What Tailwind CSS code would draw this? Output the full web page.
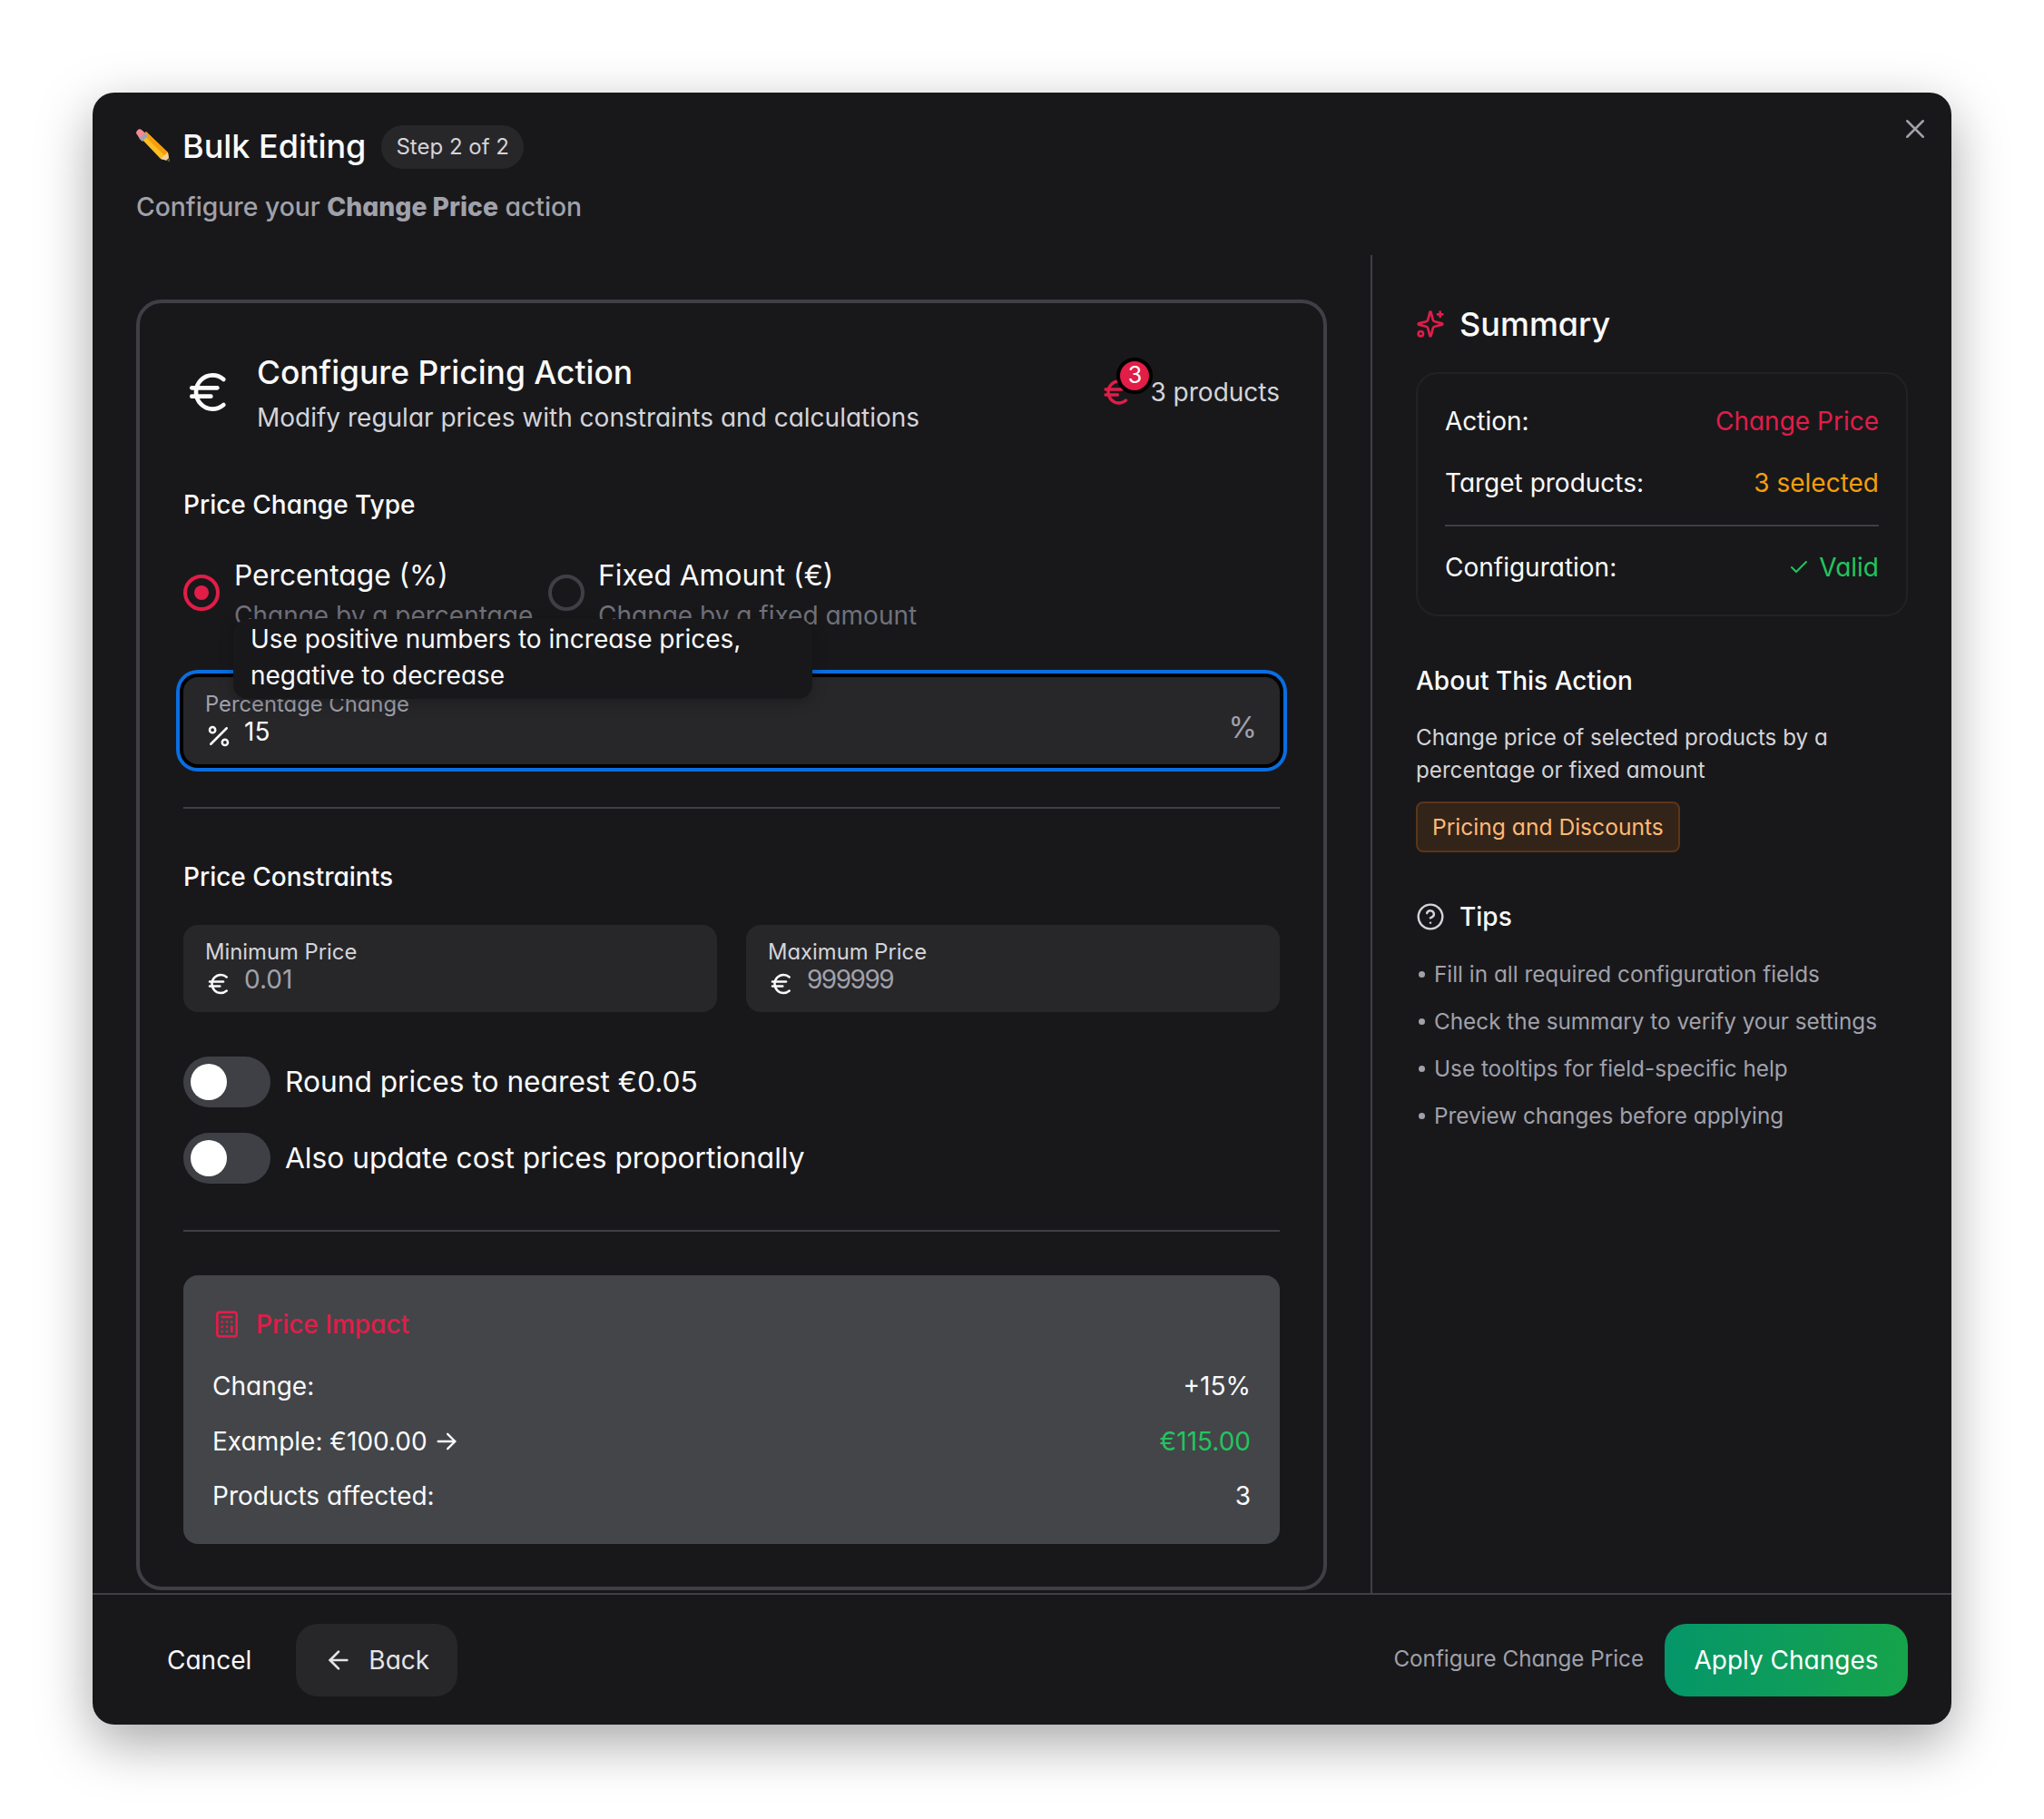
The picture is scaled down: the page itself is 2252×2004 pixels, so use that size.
<!doctype html>
<html>
<head>
<meta charset="utf-8">
<script src="https://cdn.jsdelivr.net/npm/@tailwindcss/browser@4"></script>
</head>
<body class="bg-white font-['Inter',sans-serif] [font-feature-settings:'cv11'] text-[#fafafa]">
<div class="p-[102px] w-[2252px] h-[2004px]">
<div class="relative flex flex-col w-[2048px] h-[1798px] rounded-[24px] bg-[#18181b] shadow-[0_20px_60px_rgba(0,0,0,0.35)]">
  <!-- close -->
  <svg class="absolute right-[25px] top-[25px] w-[30px] h-[30px] text-[#a1a1aa]" viewBox="0 0 24 24" fill="none" stroke="currentColor" stroke-width="2" stroke-linecap="round"><path d="M19 5 5 19M5 5l14 14"/></svg>

  <!-- header -->
  <div class="h-[179px] shrink-0 px-12 pt-[35px]">
    <div class="flex items-center h-12">
      <svg class="w-[38px] h-[38px] mr-[13px]" viewBox="0 0 38 38">
        <polygon points="5,10 11,3 35,26 36.500,35.500 27,33" fill="#fbbf24"/>
        <polygon points="8,6.500 11,3 35,26 32,30" fill="#f59e0b"/>
        <polygon points="27,33 36.500,35.500 35,26 31,29" fill="#f5d0a0"/>
        <polygon points="33,34.800 36.500,35.500 36,32" fill="#44403c"/>
        <polygon points="3.500,11 10,4 13,7.500 7,14" fill="#9ca3af"/>
        <path d="M1.500 7a3.500 3.500 0 0 1 5-5.500l3.500 3-6 6.500z" fill="#f28b96"/>
      </svg>
      <span class="text-[36px] leading-[48px] font-medium">Bulk Editing</span>
      <span class="ml-[17px] h-12 px-[16px] flex items-center rounded-full bg-[#27272a] text-[24px] text-[#d4d4d8] mt-[1px]">Step 2 of 2</span>
    </div>
    <p class="mt-[23px] text-[28.3px] leading-10 font-medium text-[#a1a1aa]">Configure your <strong class="font-extrabold">Change Price</strong> action</p>
  </div>

  <!-- body -->
  <div class="flex flex-1 min-h-0">
    <!-- left -->
    <div class="w-[1408px] shrink-0 pl-12 pr-[48px] pt-[49px] pb-[3px]">
      <div class="h-full rounded-[28px] border-4 border-[#3f3f46] px-12 pt-[50px]">
        <div class="flex items-center justify-between h-24">
          <div class="flex items-center">
            <svg class="mr-[25px] w-14 h-14" viewBox="0 0 24 24" fill="none" stroke="currentColor" stroke-width="2" stroke-linecap="round" stroke-linejoin="round"><path d="M4 10h12"/><path d="M4 14h9"/><path d="M19 6a7.7 7.7 0 0 0-5.2-2A7.9 7.9 0 0 0 6 12c0 4.400 3.500 8 7.800 8 2 0 3.800-.8 5.200-2"/></svg>
            <div>
              <h2 class="mt-[2px] text-[35.4px] leading-[48px] font-medium">Configure Pricing Action</h2>
              <p class="mt-[5px] text-[28px] leading-10 text-[#d4d4d8]">Modify regular prices with constraints and calculations</p>
            </div>
          </div>
          <div class="relative flex items-center">
            <svg class="w-[36px] h-[36px] mr-[19px] text-[#e11d48]" viewBox="0 0 24 24" fill="none" stroke="currentColor" stroke-width="2.200" stroke-linecap="round" stroke-linejoin="round"><path d="M4 10h12"/><path d="M4 14h9"/><path d="M19 6a7.7 7.7 0 0 0-5.2-2A7.9 7.9 0 0 0 6 12c0 4.400 3.500 8 7.800 8 2 0 3.800-.8 5.200-2"/></svg>
            <span class="text-[28px] leading-10 text-[#d4d4d8]">3 products</span>
            <span class="absolute left-[18px] -top-[18px] w-[40px] h-[40px] rounded-full bg-[#e11d48] border-[4px] border-black flex items-center justify-center text-[25px] text-white">3</span>
          </div>
        </div>

        <h3 class="mt-[56px] text-[28px] leading-10 font-medium">Price Change Type</h3>

        <div class="relative mt-[38px]">
          <div class="flex h-[84px]">
            <div class="flex w-[402px]">
              <span class="mt-[19px] w-[40px] h-[40px] rounded-full border-4 border-[#e11d48] flex items-center justify-center shrink-0"><span class="w-[16px] h-[16px] rounded-full bg-[#e11d48]"></span></span>
              <div class="ml-[16px]">
                <p class="text-[31.7px] leading-10">Percentage (%)</p>
                <p class="mt-1 text-[28px] leading-10 text-[#71717a] whitespace-nowrap">Change by a percentage</p>
              </div>
            </div>
            <div class="flex">
              <span class="mt-[19px] w-[40px] h-[40px] rounded-full border-4 border-[#3f3f46] shrink-0"></span>
              <div class="ml-[15px]">
                <p class="text-[31.7px] leading-10">Fixed Amount (€)</p>
                <p class="mt-1 text-[28px] leading-10 text-[#71717a] whitespace-nowrap">Change by a fixed amount</p>
              </div>
            </div>
          </div>

          <div class="mt-12 h-24 rounded-[16px] bg-[#27272a] shadow-[0_0_0_4px_#000,0_0_0_8px_#0a6ee0] px-6 pt-[14px] flex justify-between">
            <div>
              <p class="text-[23.8px] leading-8 text-[#a1a1aa]">Percentage Change</p>
              <div class="flex h-7">
                <svg class="mt-[4px] w-[30px] h-[30px]" viewBox="0 0 24 24" fill="none" stroke="currentColor" stroke-width="2" stroke-linecap="round"><path d="M19 5 5 19"/><circle cx="6.500" cy="6.500" r="2.500"/><circle cx="17.500" cy="17.500" r="2.500"/></svg>
                <span class="ml-[13px] text-[28px] leading-7">15</span>
              </div>
            </div>
            <span class="mt-[22px] mr-[1px] text-[32px] leading-10 text-[#a1a1aa]">%</span>
          </div>

          <div class="absolute left-[55px] top-[68px] w-[638px] h-[88px] rounded-[16px] bg-[#18181b] shadow-[0_4px_16px_rgba(0,0,0,0.25)] px-[19px] py-[2px] text-[28px] leading-10">Use positive numbers to increase prices, negative to decrease</div>
        </div>

        <div class="mt-[47px] h-[2px] bg-[#3f3f46]"></div>

        <h3 class="mt-[55px] text-[28px] leading-10 font-medium">Price Constraints</h3>

        <div class="mt-[33px] grid grid-cols-2 gap-8">
          <div class="h-24 rounded-[16px] bg-[#27272a] px-6 pt-[14px]">
            <p class="text-[23.8px] leading-8 text-[#d4d4d8]">Minimum Price</p>
            <div class="flex h-7">
              <svg class="mt-[4px] w-[30px] h-[30px]" viewBox="0 0 24 24" fill="none" stroke="currentColor" stroke-width="2" stroke-linecap="round" stroke-linejoin="round"><path d="M4 10h12"/><path d="M4 14h9"/><path d="M19 6a7.7 7.7 0 0 0-5.2-2A7.9 7.9 0 0 0 6 12c0 4.400 3.500 8 7.800 8 2 0 3.800-.8 5.200-2"/></svg>
              <span class="ml-[13px] text-[28px] leading-7 text-[#a1a1aa]">0.01</span>
            </div>
          </div>
          <div class="h-24 rounded-[16px] bg-[#27272a] px-6 pt-[14px]">
            <p class="text-[23.8px] leading-8 text-[#d4d4d8]">Maximum Price</p>
            <div class="flex h-7">
              <svg class="mt-[4px] w-[30px] h-[30px]" viewBox="0 0 24 24" fill="none" stroke="currentColor" stroke-width="2" stroke-linecap="round" stroke-linejoin="round"><path d="M4 10h12"/><path d="M4 14h9"/><path d="M19 6a7.7 7.7 0 0 0-5.2-2A7.9 7.9 0 0 0 6 12c0 4.400 3.500 8 7.800 8 2 0 3.800-.8 5.200-2"/></svg>
              <span class="ml-[13px] text-[28px] leading-7 tracking-[-1.5px] text-[#a1a1aa]">999999</span>
            </div>
          </div>
        </div>

        <div class="mt-[49px] flex items-center h-14">
          <span class="w-24 h-14 rounded-full bg-[#3f3f46] flex items-center pl-[8px]"><span class="w-10 h-10 rounded-full bg-white"></span></span>
          <span class="ml-4 text-[31.7px] leading-10">Round prices to nearest €0.05</span>
        </div>
        <div class="mt-[28px] flex items-center h-14">
          <span class="w-24 h-14 rounded-full bg-[#3f3f46] flex items-center pl-[8px]"><span class="w-10 h-10 rounded-full bg-white"></span></span>
          <span class="ml-4 text-[31.7px] leading-10">Also update cost prices proportionally</span>
        </div>

        <div class="mt-[51px] h-[2px] bg-[#3f3f46]"></div>

        <div class="mt-[48px] h-[296px] rounded-[16px] bg-[#434549] px-8 pt-[34px]">
          <div class="flex items-center h-10 text-[#e11d48]">
            <svg class="w-8 h-8 mr-4" viewBox="0 0 24 24" fill="none" stroke="currentColor" stroke-width="2" stroke-linecap="round" stroke-linejoin="round"><rect width="16" height="20" x="4" y="2" rx="2"/><path d="M8 6h8"/><path d="M16 14v4"/><path d="M16 10h.01"/><path d="M12 10h.01"/><path d="M8 10h.01"/><path d="M12 14h.01"/><path d="M8 14h.01"/><path d="M12 18h.01"/><path d="M8 18h.01"/></svg>
            <span class="text-[28px] leading-10 font-medium">Price Impact</span>
          </div>
          <div class="mt-[28px] flex flex-col gap-[20.5px] text-[28px] leading-10">
            <div class="flex justify-between"><span>Change:</span><span>+15%</span></div>
            <div class="flex justify-between">
              <span class="flex items-center">Example: €100.00
                <svg class="ml-[7px] w-[28px] h-[28px]" viewBox="0 0 24 24" fill="none" stroke="currentColor" stroke-width="2" stroke-linecap="round" stroke-linejoin="round"><path d="M4 12h16"/><path d="m13 5 7 7-7 7"/></svg>
              </span>
              <span class="text-[#22c55e]">€115.00</span>
            </div>
            <div class="flex justify-between"><span>Products affected:</span><span>3</span></div>
          </div>
        </div>
      </div>
    </div>

    <!-- right -->
    <div class="flex-1 border-l-2 border-[#3f3f46] pl-[48px] pr-[48px] pt-[52px]">
      <div class="flex items-center h-12">
        <svg class="w-8 h-8 mr-4 text-[#e11d48]" viewBox="0 0 24 24" fill="none" stroke="currentColor" stroke-width="2" stroke-linecap="round" stroke-linejoin="round"><path d="M9.937 15.500A2 2 0 0 0 8.500 14.063l-6.135-1.582a.5.5 0 0 1 0-.962L8.500 9.936A2 2 0 0 0 9.937 8.500l1.582-6.135a.5.5 0 0 1 .963 0L14.063 8.500A2 2 0 0 0 15.500 9.937l6.135 1.581a.5.5 0 0 1 0 .964L15.500 14.063a2 2 0 0 0-1.437 1.437l-1.582 6.135a.5.5 0 0 1-.963 0z"/><path d="M20 2v4"/><path d="M22 4h-4"/><circle cx="4" cy="20" r="2"/></svg>
        <span class="text-[36px] leading-[48px] font-medium">Summary</span>
      </div>

      <div class="mt-[29px] rounded-[24px] border-2 border-[#222225] px-[30px] pt-[32px] pb-[32px] text-[28px] leading-10">
        <div class="flex justify-between"><span>Action:</span><span class="text-[#e11d48]">Change Price</span></div>
        <div class="mt-[28px] flex justify-between"><span>Target products:</span><span class="text-[#f59e0b]">3 selected</span></div>
        <div class="mt-[26px] h-[2px] bg-[#3f3f46]"></div>
        <div class="mt-[25px] flex justify-between"><span>Configuration:</span>
          <span class="flex items-center text-[#22c55e]">
            <svg class="w-6 h-6 mr-[10px]" viewBox="0 0 24 24" fill="none" stroke="currentColor" stroke-width="2" stroke-linecap="round" stroke-linejoin="round"><path d="M20 6 9 17l-5-5"/></svg>
            Valid</span></div>
      </div>

      <h3 class="mt-[51px] text-[28px] leading-10 font-medium">About This Action</h3>
      <p class="mt-[25px] text-[24.2px] leading-9 text-[#d4d4d8]">Change price of selected products by a percentage or fixed amount</p>
      <span class="mt-4 inline-flex items-center h-14 px-[16px] rounded-[8px] border-2 border-[#5c3518] bg-[#33241a] text-[24.6px] text-[#fdba74]">Pricing and Discounts</span>

      <div class="mt-[51px] flex items-center h-10">
        <svg class="w-8 h-8 mr-4 text-[#d4d4d8]" viewBox="0 0 24 24" fill="none" stroke="currentColor" stroke-width="1.800" stroke-linecap="round" stroke-linejoin="round"><circle cx="12" cy="12" r="10"/><path d="M9.090 9a3 3 0 0 1 5.830 1c0 2-3 3-3 3"/><path d="M12 17h.01"/></svg>
        <span class="text-[28px] leading-10 font-medium">Tips</span>
      </div>
      <ul class="mt-[25px] flex flex-col gap-4 text-[24.3px] leading-9 text-[#a1a1aa]">
        <li class="flex items-center"><span class="ml-[3px] mr-[10px] w-[7px] h-[7px] rounded-full bg-[#a1a1aa]"></span>Fill in all required configuration fields</li>
        <li class="flex items-center"><span class="ml-[3px] mr-[10px] w-[7px] h-[7px] rounded-full bg-[#a1a1aa]"></span>Check the summary to verify your settings</li>
        <li class="flex items-center"><span class="ml-[3px] mr-[10px] w-[7px] h-[7px] rounded-full bg-[#a1a1aa]"></span>Use tooltips for field-specific help</li>
        <li class="flex items-center"><span class="ml-[3px] mr-[10px] w-[7px] h-[7px] rounded-full bg-[#a1a1aa]"></span>Preview changes before applying</li>
      </ul>
    </div>
  </div>

  <!-- footer -->
  <div class="h-[145px] shrink-0 border-t-2 border-[#3f3f46] px-12 flex items-center justify-between">
    <div class="flex items-center">
      <span class="pl-[34px] mr-[49px] text-[28px]">Cancel</span>
      <span class="h-20 w-[178px] rounded-[24px] bg-[#27272a] flex items-center justify-center text-[28px] text-[#e4e4e7]">
        <svg class="w-8 h-8 mr-[17px]" viewBox="0 0 24 24" fill="none" stroke="currentColor" stroke-width="2" stroke-linecap="round" stroke-linejoin="round"><path d="m12 19-7-7 7-7"/><path d="M19 12H5"/></svg>
        Back
      </span>
    </div>
    <div class="flex items-center">
      <span class="mr-[23px] text-[24.2px] text-[#a1a1aa]">Configure Change Price</span>
      <span class="h-20 w-[268px] rounded-[24px] bg-gradient-to-r from-[#059669] to-[#16a34a] flex items-center justify-center text-[28px] text-white">Apply Changes</span>
    </div>
  </div>
</div>
</div>
</body>
</html>
